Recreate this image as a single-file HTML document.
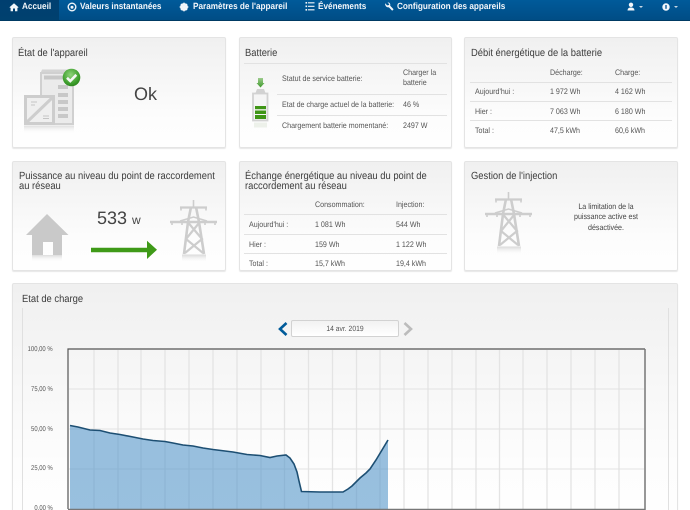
<!DOCTYPE html>
<html lang="fr">
<head>
<meta charset="utf-8">
<title>Accueil</title>
<style>
html,body{margin:0;padding:0;width:690px;height:510px;overflow:hidden;background:#fff;font-family:"Liberation Sans",Arial,sans-serif;color:#444;text-rendering:geometricPrecision}
#root{position:relative;width:690px;height:510px;overflow:hidden}
.nav{position:absolute;left:0;top:0;width:690px;height:20px;background:linear-gradient(#005a9a,#004d85);border-bottom:1px solid #003a63}
.tab{position:absolute;top:0;height:20px;line-height:13px;color:#f2f6fa;font-weight:bold;font-size:9px;white-space:nowrap;transform:scaleX(.91);transform-origin:left center}
.active{position:absolute;left:0;top:0;width:59px;height:20px;background:linear-gradient(#003f70,#00416f)}
.p{position:absolute;box-sizing:border-box;border:1px solid #e4e4e4;border-radius:2px;background:linear-gradient(#f0f0f0,#fdfdfd 75%,#fefefe);box-shadow:0 1px 1px #e6e6e6}
.t{position:absolute;white-space:nowrap}
.h{font-size:10.4px;line-height:10.6px;color:#3c3c3c;transform:scaleX(.904);transform-origin:left center;margin-top:1.500px}
.s{font-size:8px;line-height:10px;color:#555;transform:scaleX(.888);transform-origin:left center}
.y{font-size:7px;line-height:10px;color:#555;right:637px;transform:scaleX(.843);transform-origin:right center;margin-top:.800px}
.l{position:absolute;height:1px;background:#e2e2e2}
svg{position:absolute;overflow:visible}
</style>
</head>
<body>
<div id="root">
<div class="nav"></div>
<div class="active"></div>
<svg style="left:9px;top:2px" width="10" height="10" viewBox="0 0 10 10"><path d="M0.5 5.2 5 1.2l4.5 4-.6.7L8.4 5.6V9.2H6V6.5H4V9.2H1.6V5.6l-.5.3z" fill="#f2f6fa"/></svg>
<div class="tab" style="left:22px">Accueil</div>
<svg style="left:67px;top:1.5px" width="10" height="10" viewBox="0 0 10 10"><circle cx="5" cy="5" r="3.8" fill="none" stroke="#eef4f9" stroke-width="1.4"/><circle cx="5" cy="5.2" r="1.5" fill="#eef4f9"/></svg>
<div class="tab" style="left:80px">Valeurs instantanées</div>
<svg style="left:179px;top:1.5px" width="10" height="10" viewBox="0 0 10 10"><circle cx="5" cy="5" r="2.8" fill="none" stroke="#f2f6fa" stroke-width="2.2"/><path d="M5 .6v8.8M.6 5h8.8M1.9 1.9l6.2 6.2M8.1 1.9 1.9 8.1" stroke="#f2f6fa" stroke-width="1.3"/></svg>
<div class="tab" style="left:192.500px">Paramètres de l'appareil</div>
<svg style="left:305px;top:2px" width="10" height="9" viewBox="0 0 10 9"><path d="M.5 0h1.6v1.6H.5zM.5 3.5h1.6v1.6H.5zM.5 7h1.6v1.6H.5zM3 .2h6.500v1.2H3zM3 3.700h6.500v1.2H3zM3 7.200h6.500v1.2H3z" fill="#f2f6fa"/></svg>
<div class="tab" style="left:318px">Événements</div>
<svg style="left:384px;top:2px" width="10" height="10" viewBox="0 0 10 10"><path d="M1 1.300 3.200 3.400l1.500-.3c.6-.1.700-.7.300-1.200L3.600.6C5 .2 6.300 1.200 6.300 2.800L6.200 3.700 9.600 7.300 8.200 8.800 4.800 5.300C3 5.800.9 4.100 1 1.300z" fill="#f2f6fa"/></svg>
<div class="tab" style="left:397px">Configuration des appareils</div>
<svg style="left:626px;top:2px" width="22" height="10" viewBox="0 0 22 10"><circle cx="5" cy="2.800" r="2.200" fill="#f2f6fa"/><path d="M1.500 8.500c.2-2.600 2-3 3.500-3s3.300.4 3.500 3z" fill="#f2f6fa"/><path d="M13 4h4l-2 2z" fill="#c6d7e4"/></svg>
<svg style="left:661px;top:2px" width="22" height="10" viewBox="0 0 22 10"><circle cx="5" cy="5" r="3.700" fill="#f2f6fa"/><rect x="4.300" y="3" width="1.400" height="3.800" fill="#0a5a96"/><path d="M13 4h4l-2 2z" fill="#c6d7e4"/></svg>

<!-- Row 1 -->
<div class="p" style="left:12px;top:37px;width:214px;height:111px"></div>
<div class="t h" style="left:18px;top:47.500px">État de l'appareil</div>
<svg style="left:24px;top:68px" width="60" height="70" viewBox="0 0 60 70">
<defs><linearGradient id="fade" x1="0" y1="0" x2="0" y2="1"><stop offset="0" stop-color="#dcdcdc"/><stop offset="1" stop-color="#fff" stop-opacity="0"/></linearGradient></defs>
<path d="M17 4 18 1.500H45L47 4z" fill="#d4d4d4"/>
<rect x="16" y="4" width="34" height="53" fill="#d0d0d0"/>
<rect x="18" y="6" width="30" height="49" fill="#ebebeb"/>
<rect x="20" y="7.500" width="23" height="4" fill="#c8c8c8"/>
<rect x="34" y="17" width="10" height="4" fill="#c8c8c8"/><rect x="34" y="25" width="10" height="4" fill="#c8c8c8"/><rect x="34" y="32" width="10" height="4" fill="#c8c8c8"/><rect x="34" y="39" width="10" height="4" fill="#c8c8c8"/><rect x="34" y="46" width="10" height="4" fill="#c8c8c8"/>
<rect x="0" y="27" width="31" height="30" fill="#cdcdcd"/>
<rect x="3" y="30" width="25" height="24" fill="#efefef"/>
<path d="M3 54 28 30" stroke="#cdcdcd" stroke-width="3"/>
<path d="M7 34h6M7 37h4M19 48h6M19 50.500h6" stroke="#c4c4c4" stroke-width="1"/>
<rect x="0" y="57.500" width="50" height="8" fill="url(#fade)"/>
</svg>
<svg style="left:62px;top:68px" width="20" height="20" viewBox="0 0 20 20">
<defs><radialGradient id="gr" cx=".45" cy=".35" r=".7"><stop offset="0" stop-color="#8fd47a"/><stop offset=".7" stop-color="#3d9e2c"/><stop offset="1" stop-color="#2a7f1c"/></radialGradient></defs>
<circle cx="9.500" cy="9.500" r="8.800" fill="url(#gr)"/>
<path d="M5 9.800 8.300 13 14.300 6.800" fill="none" stroke="#f4f7f4" stroke-width="2.600"/>
</svg>
<div class="t" style="left:134px;top:84px;font-size:18px;line-height:20px;color:#444">Ok</div>

<div class="p" style="left:239px;top:37px;width:213px;height:111px"></div>
<div class="t h" style="left:244.500px;top:47.500px">Batterie</div>
<div class="l" style="left:244px;top:63px;width:203px"></div>
<div class="l" style="left:277px;top:94px;width:170px"></div>
<div class="l" style="left:277px;top:115px;width:170px"></div>
<svg style="left:250px;top:76px" width="20" height="56" viewBox="0 0 20 56">
<defs><linearGradient id="ga" x1="0" y1="0" x2="0" y2="1"><stop offset="0" stop-color="#9dcc8d"/><stop offset="1" stop-color="#3f9a2b"/></linearGradient></defs>
<path d="M8 2h5v5h1.500L10.500 11.500 6.500 7H8z" fill="url(#ga)"/>
<path d="M7 13h7l1.500 4H5.500z" fill="#d2d2d2"/>
<rect x="3" y="17.500" width="14.500" height="27" fill="#f5f5f5" stroke="#d2d2d2" stroke-width="1.800"/>
<rect x="5" y="30" width="11" height="3.200" fill="#3f9516"/><rect x="5" y="34.500" width="11" height="3.500" fill="#3f9516"/><rect x="5" y="39" width="11" height="4" fill="#3f9516"/>
<rect x="4" y="46.500" width="13" height="5" fill="#edf1ea"/>
</svg>
<div class="t s" style="left:282px;top:73.500px">Statut de service batterie:</div>
<div class="t s" style="left:403px;top:68px">Charger la<br>batterie</div>
<div class="t s" style="left:282px;top:100px">Etat de charge actuel de la batterie:</div>
<div class="t s" style="left:403px;top:100px">46 %</div>
<div class="t s" style="left:282px;top:121px">Chargement batterie momentané:</div>
<div class="t s" style="left:403px;top:121px">2497 W</div>

<div class="p" style="left:464px;top:37px;width:214px;height:111px"></div>
<div class="t h" style="left:471px;top:47.500px">Débit énergétique de la batterie</div>
<div class="l" style="left:470px;top:82px;width:202px"></div>
<div class="l" style="left:470px;top:101px;width:202px"></div>
<div class="l" style="left:470px;top:120px;width:202px"></div>
<div class="t s" style="left:550px;top:67.500px">Décharge:</div>
<div class="t s" style="left:615px;top:67.500px">Charge:</div>
<div class="t s" style="left:475px;top:87px">Aujourd'hui :</div>
<div class="t s" style="left:550px;top:87px">1 972 Wh</div>
<div class="t s" style="left:615px;top:87px">4 162 Wh</div>
<div class="t s" style="left:475px;top:106.500px">Hier :</div>
<div class="t s" style="left:550px;top:106.500px">7 063 Wh</div>
<div class="t s" style="left:615px;top:106.500px">6 180 Wh</div>
<div class="t s" style="left:475px;top:126px">Total :</div>
<div class="t s" style="left:550px;top:126px">47,5 kWh</div>
<div class="t s" style="left:615px;top:126px">60,6 kWh</div>

<!-- Row 2 -->
<div class="p" style="left:12px;top:161px;width:214px;height:110px"></div>
<div class="t h" style="left:18.500px;top:170px">Puissance au niveau du point de raccordement<br>au réseau</div>
<svg style="left:26px;top:213px" width="44" height="50" viewBox="0 0 44 50">
<defs><linearGradient id="fd2" x1="0" y1="0" x2="0" y2="1"><stop offset="0" stop-color="#dcdcdc"/><stop offset="1" stop-color="#fff" stop-opacity="0"/></linearGradient></defs>
<path d="M21 1 42.500 22H36V42H27V29H17V42H6V22H0z" fill="#c9c9c9"/>
<rect x="6" y="42" width="30" height="7" fill="url(#fd2)"/>
</svg>
<div class="t" style="left:97px;top:208px;font-size:18px;line-height:20px;color:#444">533 <span style="font-size:12px">w</span></div>
<svg style="left:90px;top:240px" width="68" height="20" viewBox="0 0 68 20"><path d="M1 7.700h56V0.700L67 9.700 57 19V12.300H1z" fill="#3f9a18"/></svg>
<svg style="left:160px;top:195px" width="60" height="75" viewBox="0 0 60 75">
<defs><linearGradient id="fd3" x1="0" y1="0" x2="0" y2="1"><stop offset="0" stop-color="#d8d8d8"/><stop offset="1" stop-color="#fff" stop-opacity="0"/></linearGradient>
<g id="tw" fill="none" stroke="#cdcdcd">
<path d="M33.500 5v7" stroke-width="1.600"/>
<path d="M20 12.500H47" stroke-width="2.200"/>
<path d="M10 27H57" stroke-width="2.400"/>
<path d="M20 26 33.500 22 47 26" stroke-width="1.500"/>
<path d="M31 12 28 27 24 59M36 12 39 27 44 59" stroke-width="2.600"/>
<path d="M28.500 28 42 44 25 58M39 28 26 44 43 58" stroke-width="2.200"/>
<path d="M21 13v2.500M46 13v2.500M12 28v2M22 28v2M45 28v2M55 28v2" stroke-width="1.600"/>
</g></defs>
<use href="#tw"/>
<rect x="22" y="59.500" width="24" height="8" fill="url(#fd3)"/>
</svg>

<div class="p" style="left:239px;top:161px;width:213px;height:110px"></div>
<div class="t h" style="left:244.500px;top:170px">Échange énergétique au niveau du point de<br>raccordement au réseau</div>
<div class="l" style="left:244px;top:214px;width:203px"></div>
<div class="l" style="left:244px;top:234px;width:203px"></div>
<div class="l" style="left:244px;top:253px;width:203px"></div>
<div class="t s" style="left:315px;top:200px">Consommation:</div>
<div class="t s" style="left:396px;top:200px">Injection:</div>
<div class="t s" style="left:249px;top:220px">Aujourd'hui :</div>
<div class="t s" style="left:315px;top:220px">1 081 Wh</div>
<div class="t s" style="left:396px;top:220px">544 Wh</div>
<div class="t s" style="left:249px;top:240px">Hier :</div>
<div class="t s" style="left:315px;top:240px">159 Wh</div>
<div class="t s" style="left:396px;top:240px">1 122 Wh</div>
<div class="t s" style="left:249px;top:258.500px">Total :</div>
<div class="t s" style="left:315px;top:258.500px">15,7 kWh</div>
<div class="t s" style="left:396px;top:258.500px">19,4 kWh</div>

<div class="p" style="left:464px;top:161px;width:214px;height:110px"></div>
<div class="t h" style="left:471px;top:170px">Gestion de l'injection</div>
<svg style="left:474.500px;top:187px" width="60" height="75" viewBox="0 0 60 75">
<use href="#tw"/>
<rect x="22" y="59.500" width="24" height="8" fill="url(#fd3)"/>
</svg>
<div class="t s" style="left:559.500px;top:202px;width:92px;text-align:center;line-height:10.300px;color:#444;transform-origin:center center">La limitation de la<br>puissance active est<br>désactivée.</div>

<!-- Chart panel -->
<div class="p" style="left:12px;top:283px;width:666px;height:240px"></div>
<div class="t h" style="left:21.500px;top:293px">Etat de charge</div>
<div style="position:absolute;left:22px;top:308px;width:1px;height:202px;background:#e0e0e0"></div>
<div style="position:absolute;left:668px;top:308px;width:1px;height:202px;background:#e0e0e0"></div>
<svg style="left:277px;top:322px" width="12" height="14" viewBox="0 0 12 14"><path d="M9.500 1 3 7l6.500 6" fill="none" stroke="#005b9a" stroke-width="2.600"/></svg>
<div style="position:absolute;left:291px;top:320px;width:108px;height:17px;box-sizing:border-box;border:1px solid #d2d2d2;border-radius:2px;background:linear-gradient(#f2f2f2,#fff)"></div>
<div class="t" style="left:291px;top:320px;width:108px;text-align:center;font-size:7.600px;line-height:17px;color:#555;transform:scaleX(.89)">14 avr. 2019</div>
<svg style="left:402px;top:322px" width="12" height="14" viewBox="0 0 12 14"><path d="M2.500 1 9 7l-6.500 6" fill="none" stroke="#bcbcbc" stroke-width="2.600"/></svg>

<div class="t y" style="top:344.500px">100,00 %</div>
<div class="t y" style="top:384.500px">75,00 %</div>
<div class="t y" style="top:424px">50,00 %</div>
<div class="t y" style="top:463.500px">25,00 %</div>
<div class="t y" style="top:503.500px">0,00 %</div>

<svg style="left:0;top:0" width="690" height="510" viewBox="0 0 690 510">
<g stroke="#e4e4e4" stroke-width="1.300">
<path d="M94 350V509M118 350V509M141 350V509M165 350V509M189 350V509M213 350V509M237 350V509M261 350V509M284.500 350V509M308.500 350V509M332.500 350V509M356.500 350V509M380 350V509M404 350V509M428 350V509M452 350V509M476 350V509M499.500 350V509M523 350V509M547 350V509M571 350V509M595 350V509M619 350V509"/>
</g>
<path d="M69 389H644M69 429H644M69 469H644" stroke="#e2e2e2" stroke-width="1"/>
<path d="M70 425.500 78 427 90 430 100 430.500 110 433 120 434.500 133 437 143 439 153 440.500 165 441.500 173 443 183 445 193 446 203 448 213 449.500 225 451 233 452 247 454.500 260 455.500 270 457.500 277 456 286 455 290 458 294 464 297 472 299 481 301.500 491.500 320 492 343 492 348 489 352 486 360 478 366 473 370 469 376 460 382 450 388 440V509H70Z" fill="#5b9acb" fill-opacity=".62"/>
<path d="M70 425.500 78 427 90 430 100 430.500 110 433 120 434.500 133 437 143 439 153 440.500 165 441.500 173 443 183 445 193 446 203 448 213 449.500 225 451 233 452 247 454.500 260 455.500 270 457.500 277 456 286 455 290 458 294 464 297 472 299 481 301.500 491.500 320 492 343 492 348 489 352 486 360 478 366 473 370 469 376 460 382 450 388 440" fill="none" stroke="#1d4f73" stroke-width="1.600"/>
<path d="M68 509V349H645" fill="none" stroke="#555" stroke-width="1.200"/>
<path d="M645 349V509.500H68" fill="none" stroke="#777" stroke-width="1.500"/>
</svg>
</div>
</body>
</html>
